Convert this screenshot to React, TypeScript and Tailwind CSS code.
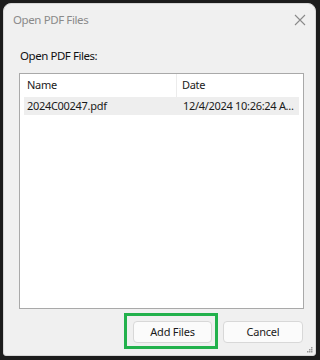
import React from "react";

export default function App() {
  const font = { fontFamily: '"Noto Sans", "Open Sans", Arial, sans-serif' };
  return (
    <div className="w-[320px] h-[360px] bg-[#1c1c1c] p-[3px] pb-[4px] pr-[4px]" style={font}>
      <div className="relative flex h-full w-full flex-col rounded-t-[8px] rounded-b-[3px] border border-[#d6d6d6] bg-[#f0f0f0]">
        <div className="flex h-[32px] items-center justify-between pl-[9px] pr-[7px]">
          <span className="text-[11.5px] text-[#8a8a8a] tracking-[-0.4px]">Open PDF Files</span>
          <svg width="14" height="14" viewBox="0 0 14 14" className="mr-[1px]">
            <path d="M2 2 L12 12 M12 2 L2 12" stroke="#8a8a8a" strokeWidth="1.1" fill="none" />
          </svg>
        </div>
        <div className="mt-[11px] pl-[16px] text-[11.5px] leading-[18px] text-[#111] tracking-[-0.45px]">Open PDF Files:</div>
        <div className="ml-[15px] mr-[11px] mt-[8px] flex h-[236px] flex-col border border-[#a9a9a9] bg-white">
          <div className="flex h-[23px] items-center text-[11px] text-[#1a1a1a] tracking-[-0.3px]">
            <div className="flex h-full w-[157px] items-center border-r border-[#ececec] pl-[7px]">Name</div>
            <div className="pl-[5px]">Date</div>
          </div>
          <div className="mx-[4px] flex h-[18px] items-center bg-[#eeeeee] text-[11px] text-[#1a1a1a] tracking-[-0.3px]">
            <div className="w-[153px] pl-[3px]">2024C00247.pdf</div>
            <div className="pl-[6px] whitespace-nowrap">12/4/2024 10:26:24 A...</div>
          </div>
        </div>
        <div className="mt-[4px] flex items-start justify-end gap-[5px] pr-[12px]">
          <div className="border-[3px] border-[#22b14c] pl-[6px] pr-[3px] pt-[5px] pb-[3px]">
            <button className="flex h-[22px] w-[79px] items-center justify-center rounded-[4px] border border-[#d8d8d8] bg-[#fbfbfb] text-[11px] tracking-[-0.2px] text-[#1a1a1a]">
              Add Files
            </button>
          </div>
          <div className="pt-[8px]">
            <button className="flex h-[22px] w-[80px] items-center justify-center rounded-[4px] border border-[#d8d8d8] bg-[#fbfbfb] text-[11px] tracking-[-0.2px] text-[#1a1a1a]">
              Cancel
            </button>
          </div>
        </div>
        <svg width="8" height="8" viewBox="0 0 8 8" className="absolute bottom-[1px] right-[1px]">
          <rect x="5" y="1" width="1.5" height="1.5" fill="#9a9a9a" />
          <rect x="3" y="3" width="1.5" height="1.5" fill="#9a9a9a" />
          <rect x="5" y="3" width="1.5" height="1.5" fill="#9a9a9a" />
          <rect x="1" y="5" width="1.5" height="1.5" fill="#9a9a9a" />
          <rect x="3" y="5" width="1.5" height="1.5" fill="#9a9a9a" />
          <rect x="5" y="5" width="1.5" height="1.5" fill="#9a9a9a" />
        </svg>
      </div>
    </div>
  );
}
